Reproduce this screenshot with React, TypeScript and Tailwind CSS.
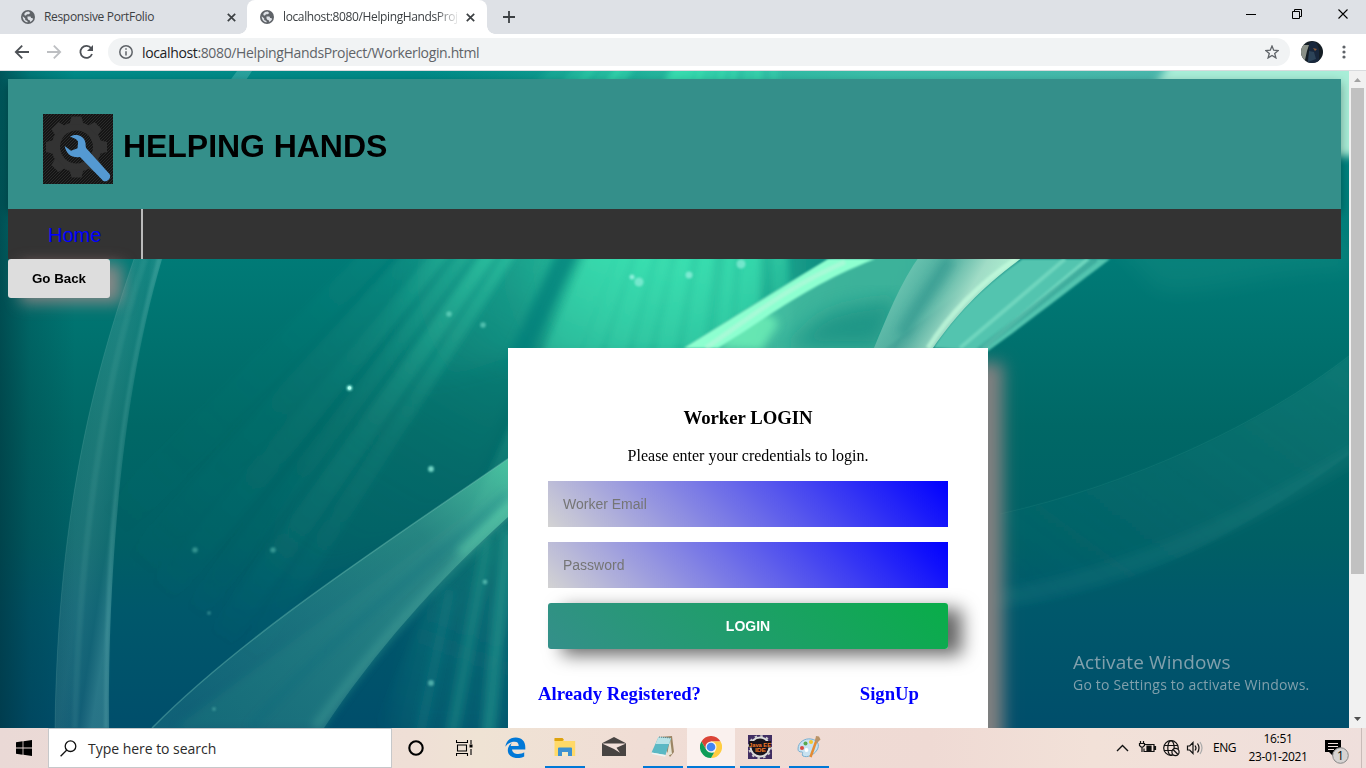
import React from "react";

const Globe = () => (
  <svg className="size-[14px] shrink-0" viewBox="0 0 14 14">
    <circle cx="7" cy="7" r="7" fill="#5f6368" />
    <path d="M1.7 6.2 4.2 8.6v1.5l2.3.8v1.6A5.6 5.6 0 0 1 1.7 6.2ZM5 2 7.6 1.5 9.3 3 7.7 4.3H6L5 5.4H3.8L3.2 4A6 6 0 0 1 5 2Z" fill="#dee1e6" />
    <path d="M6.5 6.4h3l.6 1.5h1.1l1 1.2A5.6 5.6 0 0 1 9.3 12l-.8-2H7.6L6.5 8.6Z" fill="#dee1e6" />
  </svg>
);

const Close = () => (
  <svg className="size-[9px] shrink-0" viewBox="0 0 9 9">
    <path d="m.8.8 7.400 7.400m0-7.400L.8 8.200" stroke="#3c4043" strokeWidth="1.700" />
  </svg>
);

function TabStrip() {
  return (
    <div className="flex h-[34px] shrink-0 bg-[#dee1e6]">
      <div className="flex w-[247px] items-center pl-[21px] pr-[11px]">
        <Globe />
        <span className="ml-[9px] grow whitespace-nowrap text-[12px] tracking-[-0.33px] text-[#3c4043]">Responsive PortFolio</span>
        <Close />
      </div>
      <div className="relative flex w-[240px] items-center rounded-t-[8px] bg-white pl-[13px] pr-[12px]">
        <span className="absolute -left-2 bottom-0 size-2 bg-[radial-gradient(circle_at_0_0,transparent_7.5px,white_8px)]" />
        <span className="absolute -right-2 bottom-0 size-2 bg-[radial-gradient(circle_at_100%_0,transparent_7.5px,white_8px)]" />
        <Globe />
        <span className="ml-[9px] mr-[4px] w-[180px] whitespace-nowrap text-[12px] tracking-[-0.38px] text-[#3c4043] [mask-image:linear-gradient(to_right,black_152px,transparent_177px)]">
          localhost:8080/HelpingHandsProj
        </span>
        <Close />
      </div>
      <div className="flex grow items-center pl-[16px]">
        <svg className="size-3" viewBox="0 0 12 12"><path d="M6 0v12M0 6h12" stroke="#3c4043" strokeWidth="1.800" /></svg>
      </div>
      <svg className="mt-[8px] mr-[17px] h-[13px] w-[104px]" viewBox="1245 8 104 13" fill="none" stroke="#000">
        <path d="M1246 14.500h10M1292.500 11.500h7v7h-7zM1294.500 11V9.500h7v7h-2" />
        <path d="m1338.500 9.500 9 9m0-9-9 9" strokeWidth="1.100" />
      </svg>
    </div>
  );
}

function Toolbar() {
  return (
    <div className="flex h-[37px] shrink-0 items-center border-b border-[#d9dbde] bg-white">
      <svg className="ml-[14px] h-4 w-[82px]" viewBox="14 44 82 16" fill="none" strokeWidth="1.800">
        <path d="M29 52H16m6.200-6.400L15.800 52l6.400 6.400" stroke="#4d5156" />
        <path d="M47 52h13m-6.200-6.400L60.200 52l-6.400 6.400" stroke="#bdbfc2" />
        <path d="M91.200 48.300A6 6 0 1 0 92 54" stroke="#4d5156" />
        <path d="M93 45v6h-6z" fill="#4d5156" />
      </svg>
      <div className="ml-[12px] flex h-7 w-[1182px] items-center rounded-full bg-[#f1f3f4] pl-[11px] pr-[11px]">
        <svg className="size-[14px]" viewBox="0 0 14 14" fill="none" stroke="#5f6368" strokeWidth="1.500">
          <circle cx="7" cy="7" r="6.200" /><path d="M7 6.200v4.300M7 3.300v1.500" />
        </svg>
        <span className="ml-[9px] grow whitespace-nowrap text-[14px] tracking-[-0.36px] text-[#5f6368]">
          <span className="text-[#202124]">localhost</span>:8080/HelpingHandsProject/Workerlogin.html
        </span>
        <svg className="size-[14px]" viewBox="0 0 14 14" fill="none" stroke="#5f6368" strokeWidth="1.300">
          <path d="m7 1 1.700 4.200 4.500.3-3.500 2.900 1.200 4.500L7 10.500l-3.900 2.400 1.200-4.500L.8 5.500l4.500-.3Z" />
        </svg>
      </div>
      <svg className="ml-[11px] size-[22px]" viewBox="0 0 22 22">
        <clipPath id="av"><circle cx="11" cy="11" r="11" /></clipPath>
        <g clipPath="url(#av)">
          <path d="M0 0h22v22H0z" fill="#141d24" />
          <path d="M0 4h8L6 10l-2 9H0z" fill="#8b9188" />
          <path d="M8 3c2-3 6-3 8 0l2 5v14H6l2-9z" fill="#18273c" />
          <path d="m8 10 5 1 2 7-8 3z" fill="#2c4358" />
          <path d="m12 7 4 1-2 2z" fill="#8d5a35" />
        </g>
      </svg>
      <svg className="ml-[19px] h-[14px] w-1" viewBox="0 0 4 14" fill="#5f6368"><circle cx="2" cy="2" r="1.600" /><circle cx="2" cy="7" r="1.600" /><circle cx="2" cy="12" r="1.600" /></svg>
    </div>
  );
}

/* Light rays: x where each crosses the y=259 line, its width there, and its strength. */
const SOURCE = { x: 766, y: -142 };
const RAYS: [number, number, number][] = [
  [372, 34, 0.2], [410, 26, 0.4], [436, 22, 0.65], [462, 16, 0.5], [486, 18, 0.9],
  [506, 14, 0.7], [600, 30, 1], [624, 16, 1], [644, 18, 1], [664, 14, 0.8],
  [684, 16, 0.9], [706, 16, 0.8], [730, 12, 0.7], [750, 20, 0.7], [780, 16, 0.5],
];
const rayPath = (x: number, w: number) => {
  const k = (735 - SOURCE.y) / (259 - SOURCE.y);
  const end = (v: number) => SOURCE.x + (v - SOURCE.x) * k;
  return `M${SOURCE.x} ${SOURCE.y}L${end(x - w / 2)} 735H${end(x + w / 2)}Z`;
};

function Aurora() {
  return (
    <svg className="absolute inset-0 h-full w-full" viewBox="0 71 1349 657" preserveAspectRatio="none">
      <defs>
        <linearGradient id="base" x2="0" y2="1">
          <stop offset="0" stopColor="#008b88" /><stop offset=".28" stopColor="#007b77" />
          <stop offset=".54" stopColor="#006866" /><stop offset=".72" stopColor="#005f65" />
          <stop offset=".82" stopColor="#00586b" /><stop offset="1" stopColor="#004e6b" />
        </linearGradient>
        <linearGradient id="edge">
          <stop offset="0" stopColor="#00303a" stopOpacity=".58" /><stop offset=".4" stopColor="#00303a" stopOpacity=".22" /><stop offset="1" stopColor="#00303a" stopOpacity="0" />
        </linearGradient>
        <radialGradient id="ray" gradientUnits="userSpaceOnUse" cx="766" cy="-142" r="960">
          <stop offset=".42" stopColor="#3ce6b4" stopOpacity=".8" /><stop offset=".56" stopColor="#35c8a4" stopOpacity=".5" />
          <stop offset=".72" stopColor="#2c9a8a" stopOpacity=".26" /><stop offset="1" stopColor="#208f86" stopOpacity="0" />
        </radialGradient>
        <radialGradient id="glow" gradientUnits="userSpaceOnUse" cx="0" cy="0" r="1" gradientTransform="translate(670 270) scale(300 240)">
          <stop offset="0" stopColor="#34d6aa" stopOpacity=".95" /><stop offset=".3" stopColor="#2bc19c" stopOpacity=".8" /><stop offset=".55" stopColor="#20a18c" stopOpacity=".4" /><stop offset="1" stopColor="#20a18c" stopOpacity="0" />
        </radialGradient>
        <linearGradient id="left" gradientUnits="userSpaceOnUse" x1="60" y1="500" x2="125" y2="510">
          <stop offset="0" stopColor="#8fc4c0" stopOpacity=".16" /><stop offset=".5" stopColor="#8fc4c0" stopOpacity=".2" /><stop offset=".8" stopColor="#8fc4c0" stopOpacity=".13" /><stop offset="1" stopColor="#9ce0d8" stopOpacity=".26" />
        </linearGradient>
        <linearGradient id="mid" gradientUnits="userSpaceOnUse" x1="200" y1="728" x2="530" y2="470">
          <stop offset="0" stopColor="#4aa0a0" stopOpacity=".22" /><stop offset=".7" stopColor="#5ab7a8" stopOpacity=".42" /><stop offset="1" stopColor="#63e6b5" stopOpacity=".72" />
        </linearGradient>
        <linearGradient id="hi" gradientUnits="userSpaceOnUse" x1="880" y1="270" x2="980" y2="330">
          <stop offset="0" stopColor="#8bdac4" stopOpacity=".85" /><stop offset=".45" stopColor="#52ad9f" stopOpacity=".85" /><stop offset=".75" stopColor="#a0dcc6" /><stop offset="1" stopColor="#b0f2d2" />
        </linearGradient>
        <linearGradient id="fade" x1="1" x2="0" y2="1">
          <stop offset="0" stopColor="#4aa9a0" stopOpacity=".16" /><stop offset="1" stopColor="#2b909a" stopOpacity=".02" />
        </linearGradient>
        <linearGradient id="strip">
          <stop offset="0" stopColor="#1aa090" stopOpacity="0" /><stop offset=".3" stopColor="#3ad0aa" stopOpacity=".6" /><stop offset=".6" stopColor="#4bcbb2" stopOpacity=".8" /><stop offset="1" stopColor="#4bb5ac" />
        </linearGradient>
        <filter id="b1"><feGaussianBlur stdDeviation="1" /></filter>
        <filter id="b2" x="-10%" y="-10%" width="120%" height="120%"><feGaussianBlur stdDeviation="3" /></filter>
        <filter id="b4" x="-30%" y="-30%" width="160%" height="160%"><feGaussianBlur stdDeviation="4" /></filter>
        <filter id="b10" x="-30%" y="-30%" width="160%" height="160%"><feGaussianBlur stdDeviation="10" /></filter>
      </defs>
      <path d="M0 71h1349v657H0z" fill="url(#base)" />
      <path d="M420 71h770v20H420z" fill="url(#strip)" />
      <path d="M1172 60h240v96h-80L1152 90z" fill="#a8eed8" filter="url(#b4)" />
      <path d="M430 180H1000L870 360H500L380 400Z" fill="url(#glow)" filter="url(#b10)" />
      <path d="M470 200 585 200 480 500 200 640Z" fill="url(#ray)" opacity=".4" filter="url(#b10)" />
      <path d="M575 200H790L740 360H540Z" fill="#38d9ac" opacity=".4" filter="url(#b10)" />
      <g fill="url(#ray)" filter="url(#b2)">
        {RAYS.map(([x, w, o]) => <path key={x} d={rayPath(x, w)} opacity={o} />)}
      </g>
      <g filter="url(#b4)">
        <path d="m562 240-60 130h20l64-130z" fill="#007e79" opacity=".75" />
      </g>
      <path d="M512 510 420 610 390 735H512Z" fill="#17837f" opacity=".2" filter="url(#b10)" />
      <g filter="url(#b4)" fill="none">
        <path d="M488 540 452 735" stroke="#29a393" strokeWidth="12" opacity=".38" />
        <path d="M508 530 488 735" stroke="#29a393" strokeWidth="14" opacity=".5" />
        <path d="M450 590 420 735" stroke="#208b8b" strokeWidth="9" opacity=".3" />
      </g>

      <path d="M237 71C190 136 158 185 134 259 98 365 58 500 55 728h54C108 600 117 410 162 259 183 185 214 128 252 71Z" fill="url(#left)" />
      <path d="M134 259C98 365 58 500 55 728" fill="none" stroke="#79bbb5" strokeOpacity=".2" />
      <path d="M159 259C112 420 106 590 106 728" fill="none" stroke="#94dfd2" strokeWidth="4" strokeOpacity=".14" filter="url(#b1)" />
      <path d="M145 259C102 385 80 540 75 728" fill="none" stroke="#94dfd2" strokeWidth="6" strokeOpacity=".08" filter="url(#b1)" />

      <path d="M512 517C435 583 374 653 324 728H175L512 480Z" fill="#0b6a72" opacity=".5" filter="url(#b4)" />
      <path d="M152 728C245 634 382 546 512 456L684 348V400L508 517C435 583 374 653 324 728Z" fill="url(#mid)" />
      <path d="M152 728C245 634 382 546 512 456" fill="none" stroke="#80cfbf" strokeWidth="1.500" strokeOpacity=".35" />
      <path d="M315 728C375 645 440 577 512 513" fill="none" stroke="#82e0c0" strokeWidth="9" strokeOpacity=".2" filter="url(#b4)" />
      <path d="M460 553 514 499" fill="none" stroke="#79f2bf" strokeWidth="7" strokeOpacity=".38" filter="url(#b4)" />
      <path d="M250 728C330 637 430 565 508 494" fill="none" stroke="#05637b" strokeWidth="8" strokeOpacity=".22" filter="url(#b4)" />

      <path d="M684 348C780 288 840 245 920 225H1050L870 360Z" fill="#48bea2" opacity=".8" filter="url(#b1)" />
      <path d="M775 348C830 330 790 310 900 300L880 348Z" fill="#168e81" opacity=".75" filter="url(#b10)" />
      <path d="M720 348C738 310 775 305 778 325L762 350Z" fill="#72f4b9" opacity=".75" filter="url(#b4)" />
      <path d="M684 348 828 259H875C808 285 770 316 718 348Z" fill="#8dffd0" filter="url(#b1)" />
      <path d="M706 348C760 310 792 285 845 262" fill="none" stroke="#c0f5dd" strokeWidth="5" opacity=".5" filter="url(#b1)" />
      <path d="M933 348C957 310 990 281 1022 259L1110 259C1068 291 1024 325 988 351Z" fill="#52c4af" filter="url(#b1)" />
      <path d="m960 348 105-89m-82 89 105-89" stroke="#92ecd0" strokeWidth="4" opacity=".45" filter="url(#b1)" />
      <path d="m978 351 118-92" stroke="#218c84" strokeWidth="6" opacity=".4" filter="url(#b1)" />
      <path d="M874 348C888 315 901 280 924 250L1033 250C987 282 958 312 933 348Z" fill="url(#hi)" />
      <path d="M902 335C917 302 936 286 950 259" fill="none" stroke="#278f89" strokeWidth="14" opacity=".4" filter="url(#b4)" />
      <path d="M928 348C950 313 982 282 1016 259" fill="none" stroke="#c8ffe0" strokeWidth="5" opacity=".65" filter="url(#b1)" />

      <path d="M1000 514C1130 485 1262 424 1349 356V455C1240 534 1130 594 1000 610Z" fill="url(#fade)" filter="url(#b1)" />
      <path d="M1000 514C1130 485 1262 424 1349 356" fill="none" stroke="#40a093" strokeOpacity=".15" />
      <path d="M980 602C1150 575 1260 510 1380 440" fill="none" stroke="#52a2a0" strokeWidth="18" strokeOpacity=".1" filter="url(#b4)" />
      <path d="M1110 240h239v30c-90 0-130 25-190 20Z" fill="#209688" opacity=".25" filter="url(#b10)" />
      <path d="M0 71h75v657H0z" fill="url(#edge)" />
      <g fill="#8ff0dc" filter="url(#b1)">
        <circle cx="349.500" cy="388" r="2.800" /><circle cx="431" cy="469" r="2.900" opacity=".8" />
        <g opacity=".5"><circle cx="449" cy="314" r="2.800" /><circle cx="483" cy="325" r="2.800" /><circle cx="431" cy="683" r="3" /><circle cx="485" cy="582" r="2.400" /></g>
        <g opacity=".35"><circle cx="195" cy="550" r="2.800" /><circle cx="273" cy="550" r="2.800" /><circle cx="209" cy="613" r="1.800" /><circle cx="214" cy="709" r="1.800" /></g>
        <circle cx="632" cy="277" r="2.500" /><circle cx="639" cy="282" r="4.500" opacity=".7" /><circle cx="689" cy="275" r="3.500" opacity=".8" /><circle cx="741" cy="264" r="4.500" opacity=".7" />
      </g>
      <circle cx="349.500" cy="388" r="1.800" fill="#b0fff0" />
    </svg>
  );
}

function Logo() {
  return (
    <svg className="size-[70px]" viewBox="0 0 70 70">
      <defs>
        <pattern id="weave" width="3" height="3" patternUnits="userSpaceOnUse"><path d="M0 0h3v3H0z" fill="#151515" /><path d="m0 3 3-3" stroke="#303030" strokeWidth=".8" /></pattern>
      </defs>
      <path d="M0 0h70v70H0z" fill="url(#weave)" />
      <g fill="#333">
        <circle cx="33.500" cy="33" r="25" />
        {[0, 45, 90, 135, 180, 225, 270, 315].map((a) => (
          <path key={a} d="m28.500 2.500 10 0 2 8H26.500z" transform={`rotate(${a} 33.500 33)`} />
        ))}
      </g>
      <circle cx="33.500" cy="33" r="16.500" fill="url(#weave)" />
      <path d="M27 22.500C32 19.500 41 20.500 42.500 29c.4 2-.2 3.500.8 5.200L66.500 60c2.300 3.500-1.700 8.700-6.200 7L37 43c-7 1.500-14-2.500-15.300-11l6.300 4.800 6.500-2.500.6-6.500C34 25 31 24.500 27 22.500Z" fill="#5499d2" />
    </svg>
  );
}

function Page() {
  return (
    <div className="relative h-full w-[1349px] overflow-hidden font-['Liberation_Serif',serif]">
      <Aurora />
      <div className="relative px-2 pt-2">
        <header className="flex h-[130px] items-start bg-[#348f8a] pl-[35px] pt-[35px] shadow-[0_4px_10px_rgba(0,0,0,0.35)]">
          <Logo />
          <h1 className="ml-[10px] mt-[13px] whitespace-nowrap font-['Liberation_Sans',sans-serif] text-[32px] font-bold leading-[38px] tracking-[-0.05px] text-black">HELPING HANDS</h1>
        </header>
        <nav className="relative flex h-[50px] bg-[#333]">
          <a className="flex w-[135px] items-center border-r-2 border-[#bbb] pl-[40px] pt-[2px] font-['Liberation_Sans',sans-serif] text-[20px] text-[#00f]">Home</a>
        </nav>
        <button className="relative block h-[39px] w-[102px] rounded-[3px] bg-[#ddd] font-['Liberation_Sans',sans-serif] text-[13.333px] font-bold text-black shadow-[12px_5px_15px_rgba(188,143,143,0.7)]">Go Back</button>
        <main className="ml-[500px] mt-[50px] h-[440px] w-[480px] bg-white px-[40px] pt-[59px] text-center text-black shadow-[15px_15px_15px_gray]">
          <h3 className="text-[18.720px] font-bold leading-[22px]">Worker LOGIN</h3>
          <p className="mt-[18px] text-[16px] leading-[18px]">Please enter your credentials to login.</p>
          <div className="mt-[16px] flex flex-col gap-[15px] font-['Liberation_Sans',sans-serif] text-[14px]">
            <div className="flex h-[46px] items-center bg-[linear-gradient(45deg,lightgray,blue)] pl-[15px] text-[#757575]">Worker Email</div>
            <div className="flex h-[46px] items-center bg-[linear-gradient(45deg,lightgray,blue)] pl-[15px] text-[#757575]">Password</div>
            <button className="h-[46px] rounded-[3px] bg-[linear-gradient(45deg,#348f8a,#09ad49)] font-bold text-white shadow-[14px_6px_18px_rgba(0,0,0,0.6)]">LOGIN</button>
          </div>
          <div className="-mx-[10px] mt-[34px] flex justify-between pr-[39px] text-[18.720px] font-bold leading-[22px] text-[#00f]">
            <a>Already Registered?</a>
            <a>SignUp</a>
          </div>
        </main>
      </div>
      <div className="absolute left-[1073px] top-[579px] whitespace-nowrap font-['Open_Sans',sans-serif] text-[#80a0ac]">
        <div className="text-[19px] leading-[24px] tracking-[0.1px]">Activate Windows</div>
        <div className="mt-px text-[14px] leading-[20px] tracking-[0.2px]">Go to Settings to activate Windows.</div>
      </div>
    </div>
  );
}

function Scrollbar() {
  return (
    <div className="flex w-[17px] flex-col items-center bg-[#f1f1f1]">
      <svg className="h-[17px] w-[17px] shrink-0" viewBox="0 0 17 17"><path d="m5 11 3.500-4 3.500 4z" fill="#a3a3a3" /></svg>
      <div className="h-[486px] w-[13px] bg-[#c1c1c1]" />
      <div className="grow" />
      <svg className="h-[17px] w-[17px] shrink-0" viewBox="0 0 17 17"><path d="m5 6 3.500 4L12 6z" fill="#505050" /></svg>
    </div>
  );
}

const TaskButton = ({ children, active, on }: { children: React.ReactNode; active?: boolean; on?: boolean }) => (
  <div className={`flex h-10 flex-col items-center ${active ? "w-[48px] bg-[#faf1ee]" : "w-[49px]"}`}>
    <div className="flex h-[38px] items-center">{children}</div>
    <div className={`h-[2px] ${active ? "w-full" : "w-10"} ${on ? "bg-[#0078d7]" : ""}`} />
  </div>
);

function Taskbar() {
  return (
    <div className="flex h-10 shrink-0 items-center bg-[linear-gradient(to_right,#ead9d6,#efdfd6_30%,#efe3d4_35%,#f0ddd5_47%,#efdad4_68%,#f2e1d8_80%,#efdfdc)] font-['Open_Sans',sans-serif] text-black">
      <div className="flex w-12 justify-center">
        <svg className="size-4" viewBox="0 0 16 16"><path d="m0 2.200 6.600-.9v6.200H0zM7.400 1.200 16 0v7.500H7.400zM0 8.400h6.600v6.300L0 13.800zM7.400 8.400H16V16l-8.600-1.200z" /></svg>
      </div>
      <div className="flex h-[40px] w-[344px] items-center border border-[#c6c8ca] bg-white pl-[11px]">
        <svg className="size-[17px]" viewBox="0 0 17 17" fill="none" stroke="#111" strokeWidth="1.300"><circle cx="10.500" cy="6.200" r="5.300" /><path d="M6.800 10 .6 16.200" /></svg>
        <span className="ml-[11px] whitespace-nowrap text-[14px] tracking-[-0.03px] text-[#2b2b2b]">Type here to search</span>
      </div>
      <div className="flex w-12 justify-center"><svg className="size-4" viewBox="0 0 16 16"><circle cx="8" cy="8" r="6.700" fill="none" stroke="#000" strokeWidth="2.100" /></svg></div>
      <div className="flex w-12 justify-center">
        <svg className="h-4 w-[17px]" viewBox="0 0 17 16" fill="none" stroke="#000" strokeWidth="1.100"><path d="M.5 0v2.500h11V0M.5 16v-2.500h11V16M1.500 5h9v6h-9zM15 0v4m0 5v6" /><path d="M13.500 4.500h3v3h-3z" fill="#000" stroke="none" /></svg>
      </div>
      <div className="ml-[3px] flex">
        <TaskButton>
          <svg className="size-[21px]" viewBox="0 0 21 21"><path d="M.3 9.500C1.300 3.200 5.500.2 10.700.2c6.100 0 9.600 4 9.600 9.500v2.500H7c.3 3.100 3.100 4.500 6.200 4.500 2.500 0 4.700-.7 6-1.600v4.300c-1.800 1-4.200 1.500-6.700 1.500-6 0-9.700-3.200-9.700-7.900 0-3 1.700-5.700 4.200-7.200-.9 1-1.200 2.200-1.300 3.100h8c0-3-1.200-4.400-4-4.400C6.300 4.500 2.800 5.900.3 9.500Z" transform="translate(0 .2)" fill="#0078d7" /></svg>
        </TaskButton>
        <TaskButton on>
          <svg className="mt-[1px] h-[19px] w-[22px]" viewBox="0 0 22 19"><path d="M.5 1h8.700l1 2h11v15H.5z" fill="#ffd968" /><path d="M.5 0h8l1.300 1.500L8.500 3H.5z" fill="#dda20e" /><path d="M4 10.500q0-1 1-1h12q1 0 1 1V18h-4v-4H8v4H4z" fill="#3d91d1" /><path d="M8 14h6v4H8z" fill="#f6eac4" /></svg>
        </TaskButton>
        <TaskButton>
          <svg className="mb-[2px] h-[19px] w-6" viewBox="0 0 24 19"><path d="M0 6.300 12 0l12 6.300V19H0z" fill="#484442" /><path d="M0 6.500h24l-9.500 4.300 3.500 5L12 12z" fill="#f2e0da" /></svg>
        </TaskButton>
        <TaskButton on>
          <svg className="size-[24px]" viewBox="0 0 24 24"><path d="m8 2 13-1 2 16-4 5z" fill="#9b8564" /><path d="m19 3 2 16-5 2z" fill="#e8e3d3" /><path d="M7.500 2 20 3l-5.500 17L.5 17.500z" fill="#5bb8c4" /><path d="M7.500 2 20 3l-2 6L4.500 9z" fill="#b9e3e7" /><path d="m.5 17.500 14 2.500-.3 1.800L1 19z" fill="#edf5f4" /><path d="m8 2 12 1" stroke="#607f87" strokeDasharray="1 1" /></svg>
        </TaskButton>
        <TaskButton active on>
          <svg className="size-[22px]" viewBox="0 0 22 22"><path d="M1.470 5.500A11 11 0 0 1 20.530 5.500H11L6.240 13.750z" fill="#db4437" /><path d="M20.530 5.500A11 11 0 0 1 11 22l4.760-8.250L11 5.500z" fill="#ffcd40" /><path d="M1.470 5.500 6.240 13.750 11 16.500h3.170L11 22A11 11 0 0 1 1.470 5.500z" fill="#0f9d58" /><circle cx="11" cy="11" r="5.500" fill="#f4f4f4" /><circle cx="11" cy="11" r="4.300" fill="#4285f4" /></svg>
        </TaskButton>
        <TaskButton on>
          <svg className="size-6" viewBox="0 0 24 24"><path d="M0 0h24v24H0z" fill="#412e62" /><circle cx="12" cy="12" r="9.500" fill="#17131c" stroke="#ddd" strokeWidth="2" /><circle cx="12" cy="12" r="11" fill="none" stroke="#ccc" strokeWidth="2" strokeDasharray="2.500 3.260" /><path d="M1 6h22v6.500H19v5H6v-5H1z" fill="#17131c" /><g fill="#f37a24" fontFamily="Liberation Sans" fontWeight="bold" fontSize="6.200"><text x="1" y="11.500" textLength="22" lengthAdjust="spacingAndGlyphs">Java EE</text><text x="7" y="17.300" textLength="11" lengthAdjust="spacingAndGlyphs">IDE</text></g></svg>
        </TaskButton>
        <TaskButton on>
          <svg className="size-6" viewBox="0 0 24 24"><path d="M1 14C1 7 8 3 14 4c7 1 9 6 6 11s-10 8-14 6c-2-1 1-4-1-4-3 0-4-1-4-3Z" fill="#c8e2f1" stroke="#79afd0" /><circle cx="5" cy="13" r="2" fill="#db4b44" /><circle cx="8.500" cy="8.500" r="2" fill="#59a84f" /><circle cx="14" cy="7" r="2" fill="#f2c62e" /><circle cx="9.500" cy="15" r="1.900" fill="#fff" /><path d="m20 4-6.500 18" stroke="#e48b35" strokeWidth="2.500" /><path d="m19 1 3 .5 1.500 3L20 8l-2-2z" fill="#b99368" /></svg>
        </TaskButton>
      </div>
      <svg className="ml-auto h-[18px] w-[88px]" viewBox="1116 739 88 18" fill="none" stroke="#111" strokeWidth="1.200">
        <path d="m1117 751 5.500-5.500L1128 751" strokeWidth="1.400" />
        <path d="M1145 744.500h9v7h-10v-3M1139.500 743.500h5v2l-1.500 1.500h-2l-1.500-1.500zM1140.500 741v2m3-2v2M1142 747v5" />
        <path d="M1147 746h4v4.500h-4zM1154.500 746.500h1v3h-1z" fill="#111" />
        <circle cx="1171" cy="748" r="7.300" /><ellipse cx="1171" cy="748" rx="3.200" ry="7.300" /><path d="M1164 745.500h14m-14 5h9" /><circle cx="1175.500" cy="752" r="3.600" fill="#f1e1dd" /><path d="m1173 749.500 5 5" />
        <path d="M1187.500 746h2.200l3.300-3.500v11l-3.300-3.500h-2.200zM1195 745.500q2 2.500 0 5M1197.500 743.500q3 4.500 0 9" /><path d="M1200 742q4 6 0 12" stroke="#aaa" />
      </svg>
      <span className="ml-[9px] w-[24px] whitespace-nowrap text-[12px] tracking-[-0.5px]">ENG</span>
      <div className="ml-[11px] w-[60px] whitespace-nowrap text-center text-[12px] leading-[18px] tracking-[-0.35px]"><div>16:51</div><div>23-01-2021</div></div>
      <div className="relative ml-[17px] mr-[12px] mt-[8px] size-[24px]">
        <svg className="size-full" viewBox="0 0 24 24"><path d="M0 0h16v12H8v4l-4-4H0z" fill="#000" /><path d="M3 3.500h10M3 6.500h10M3 9.500h6" stroke="#f1e1dd" /><circle cx="15.500" cy="15.500" r="7.800" fill="#d6d3d2" stroke="#888" /></svg>
        <span className="absolute left-[12px] top-[8px] text-[12px] leading-[15px]">1</span>
      </div>
      <div className="mr-[4px] h-full w-px bg-[#c9bbb8]" />
    </div>
  );
}

export default function App() {
  return (
    <div className="flex h-[768px] w-[1366px] flex-col overflow-hidden font-['Open_Sans',sans-serif]">
      <TabStrip />
      <Toolbar />
      <div className="flex h-[657px] shrink-0"><Page /><Scrollbar /></div>
      <Taskbar />
    </div>
  );
}
